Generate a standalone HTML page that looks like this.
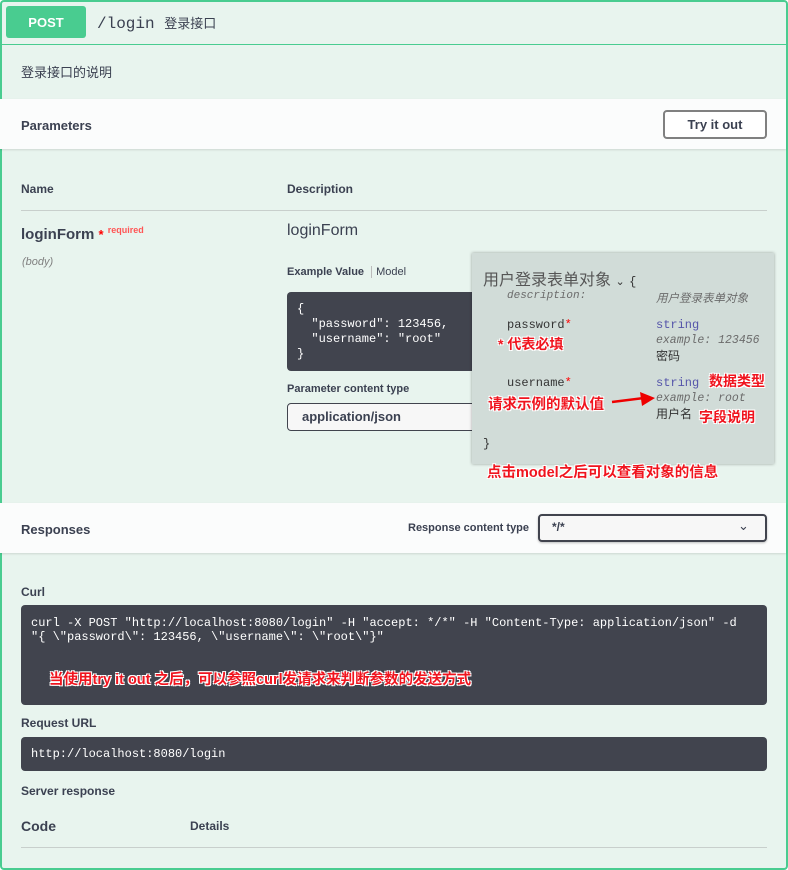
<!DOCTYPE html>
<html><head><meta charset="utf-8"><style>
*{margin:0;padding:0;box-sizing:border-box}
body{width:788px;height:858px;overflow:hidden;background:#fff;font-family:"Liberation Sans","Noto Sans CJK SC",sans-serif;color:#3b4151;position:relative}
.wrap{position:absolute;left:0;top:0;width:788px;height:870px;background:#e8f4ee;border:2px solid #49cc90;border-radius:4px}
.a{position:absolute;white-space:nowrap}
.b{font-weight:bold}
.mono{font-family:"Liberation Mono","Noto Sans CJK SC",monospace}
.white{position:absolute;left:0;width:786px;background:#fbfcfc;box-shadow:0 1px 2px rgba(0,0,0,.12)}
.dark{position:absolute;background:#41444e;border-radius:4px;color:#fff}
.red{color:#f0141e;font-weight:bold;text-shadow:-1px -1px 0 #fff,1px -1px 0 #fff,-1px 1px 0 #fff,1px 1px 0 #fff}
.sel{position:absolute;background:#f7f7f7;border:2px solid #41444e;border-radius:4px;box-shadow:0 1px 2px rgba(0,0,0,.25)}
</style></head><body>
<div class="wrap"></div>
<div class="a" style="left:0;top:44px;width:788px;border-top:1px solid #49cc90"></div>
<div class="a b" style="left:6px;top:6px;width:80px;height:32px;background:#49cc90;border-radius:3px;color:#fff;font-size:13px;text-align:center;line-height:33px">POST</div>
<div class="a mono" style="left:97px;top:13px;font-size:16px;color:#3b4151">/login <span style="font-family:'Noto Sans CJK SC',sans-serif;font-size:13px">登录接口</span></div>
<div class="a" style="left:21px;top:62px;font-size:13px">登录接口的说明</div>

<div class="white" style="top:99px;height:50px"></div>
<div class="a b" style="left:21px;top:118px;font-size:13px">Parameters</div>
<div class="a b" style="left:663px;top:110px;width:104px;height:29px;border:2px solid #808080;border-radius:4px;font-size:13px;text-align:center;line-height:25px;background:#fff">Try it out</div>

<div class="a b" style="left:21px;top:182px;font-size:12px">Name</div>
<div class="a b" style="left:287px;top:182px;font-size:12px">Description</div>
<div class="a" style="left:21px;top:210px;width:746px;border-top:1px solid #c8cfcc"></div>
<div class="a b" style="left:21px;top:225px;font-size:15px">loginForm <span style="color:red;font-size:13px">*</span> <span style="color:#f55;font-size:9px;vertical-align:6px">required</span></div>
<div class="a" style="left:22px;top:256px;font-size:11px;font-style:italic;color:#808080">(body)</div>
<div class="a" style="left:287px;top:222px;font-size:16px">loginForm</div>
<div class="a" style="left:287px;top:266px;font-size:11px"><b>Example Value</b> <span style="border-left:1px solid #bbb;margin:0 4px;"></span> Model</div>
<div class="dark" style="left:287px;top:292px;width:200px;height:79px"></div>
<div class="a mono" style="left:297px;top:302px;font-size:12px;color:#fff;line-height:15px">{<br>&nbsp;&nbsp;"password": 123456,<br>&nbsp;&nbsp;"username": "root"<br>}</div>
<div class="a b" style="left:287px;top:383px;font-size:11px">Parameter content type</div>
<div class="a" style="left:287px;top:403px;width:200px;height:28px;background:#f7f7f7;border:1px solid #41444e;border-radius:4px"></div>
<div class="a b" style="left:302px;top:409px;font-size:13px">application/json</div>

<div class="a" style="left:472px;top:253px;width:302px;height:211px;background:#d1dcd8;box-shadow:0 0 3px rgba(0,0,0,.35)"></div>
<div class="a" style="left:483px;top:266px;font-size:16px;color:#555">用户登录表单对象 <span style="font-size:11px;color:#333">⌄</span> <span class="mono" style="font-size:12px;color:#333">{</span></div>
<div class="a mono" style="left:507px;top:290px;font-size:11px;color:#6b6b6b;font-style:italic">description:</div>
<div class="a" style="left:656px;top:290px;font-size:11.5px;color:#6b6b6b;font-style:italic">用户登录表单对象</div>
<div class="a mono" style="left:507px;top:318px;font-size:12px;color:#333">password<span style="color:red">*</span></div>
<div class="a mono" style="left:656px;top:318px;font-size:12px;color:#55a;line-height:15px">string<br><i style="color:#6b6b6b;font-size:11.5px">example: 123456</i><br><span style="color:#333;font-family:'Noto Sans CJK SC',sans-serif">密码</span></div>
<div class="a red" style="left:498px;top:334px;font-size:14px">* 代表必填</div>
<div class="a mono" style="left:507px;top:376px;font-size:12px;color:#333">username<span style="color:red">*</span></div>
<div class="a mono" style="left:656px;top:376px;font-size:12px;color:#55a;line-height:15px">string<br><i style="color:#6b6b6b;font-size:11.5px">example: root</i><br><span style="color:#333;font-family:'Noto Sans CJK SC',sans-serif">用户名</span></div>
<div class="a red" style="left:488px;top:393px;font-size:14.5px">请求示例的默认值</div>
<svg class="a" style="left:610px;top:390px" width="46" height="20"><path d="M2 12 L34 8" stroke="#e00" stroke-width="2.5"/><path d="M30 2 L45 8 L32 16 Z" fill="#e00"/></svg>
<div class="a red" style="left:709px;top:371px;font-size:14px">数据类型</div>
<div class="a red" style="left:699px;top:407px;font-size:14px">字段说明</div>
<div class="a mono" style="left:483px;top:437px;font-size:12px;color:#333">}</div>
<div class="a red" style="left:487px;top:461px;font-size:14.5px">点击model之后可以查看对象的信息</div>

<div class="white" style="top:503px;height:50px"></div>
<div class="a b" style="left:21px;top:522px;font-size:13px">Responses</div>
<div class="a b" style="left:408px;top:522px;font-size:11px">Response content type</div>
<div class="sel" style="left:538px;top:514px;width:229px;height:28px"></div>
<div class="a b" style="left:552px;top:520px;font-size:12px">*/*</div>
<div class="a" style="left:738px;top:518px;font-size:13px">⌄</div>

<div class="a b" style="left:21px;top:585px;font-size:12px">Curl</div>
<div class="dark" style="left:21px;top:605px;width:746px;height:100px"></div>
<div class="a mono" style="left:31px;top:616px;font-size:12px;color:#fff;line-height:14px">curl -X POST "http://localhost:8080/login" -H "accept: */*" -H "Content-Type: application/json" -d<br>"{ \"password\": 123456, \"username\": \"root\"}"</div>
<div class="a red" style="left:49px;top:668px;font-size:14.5px">当使用try it out 之后，可以参照curl发请求来判断参数的发送方式</div>
<div class="a b" style="left:21px;top:716px;font-size:12px">Request URL</div>
<div class="dark" style="left:21px;top:737px;width:746px;height:34px"></div>
<div class="a mono" style="left:31px;top:747px;font-size:12px;color:#fff">http://localhost:8080/login</div>
<div class="a b" style="left:21px;top:784px;font-size:12px">Server response</div>
<div class="a b" style="left:21px;top:818px;font-size:14px">Code</div>
<div class="a b" style="left:190px;top:819px;font-size:12px">Details</div>
<div class="a" style="left:21px;top:847px;width:746px;border-top:1px solid #c8cfcc"></div>
</body></html>
